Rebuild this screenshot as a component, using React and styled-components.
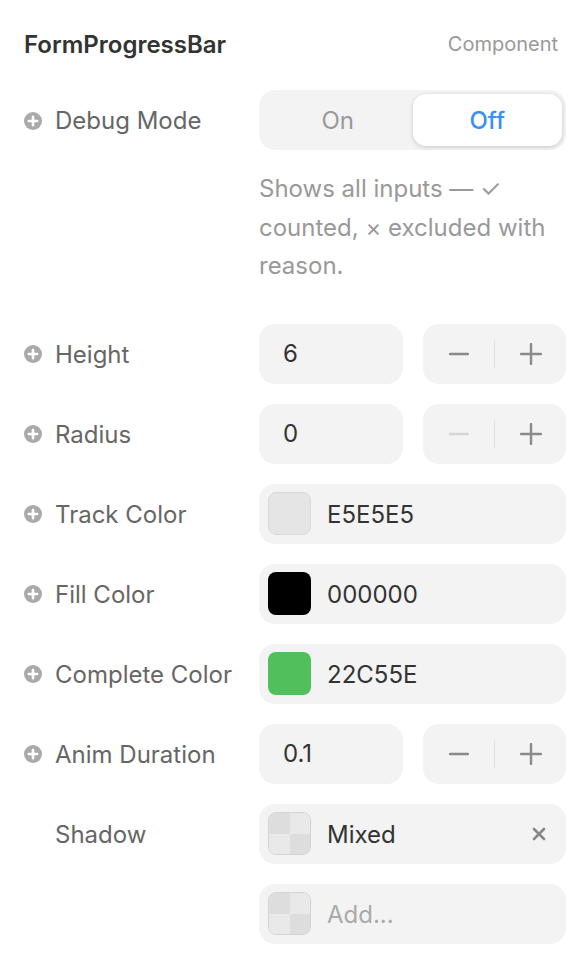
import React from "react";
import styled, { createGlobalStyle, css } from "styled-components";

const Global = createGlobalStyle`
  html, body { margin: 0; padding: 0; background: #ffffff; }
  body { font-family: Inter, "Noto Sans", "Liberation Sans", sans-serif; -webkit-font-smoothing: antialiased; }
  * { box-sizing: border-box; }
`;

const Panel = styled.div`
  width: 586px;
  padding: 22px 20px 0 24px;
  display: flex;
  flex-direction: column;
`;

const Header = styled.div`
  display: flex;
  justify-content: space-between;
  align-items: center;
  height: 44px;
  padding-right: 8px;
  margin-bottom: 24px;
`;

const Title = styled.div`
  font-size: 24px;
  font-weight: 600;
  color: #333333;
`;

const Kind = styled.div`
  font-size: 20px;
  color: #999999;
`;

const Row = styled.div`
  display: grid;
  grid-template-columns: 235px 1fr;
  align-items: center;
  margin-bottom: 20px;
`;

const Label = styled.div`
  display: flex;
  align-items: center;
  gap: 13px;
  font-size: 24px;
  color: #666666;
  padding-top: 1px;
  padding-left: ${(p) => (p.$noIcon ? "31px" : "0")};
`;

const Fields = styled.div`
  display: flex;
  gap: 20px;
`;

const Segmented = styled.div`
  flex: 1;
  height: 60px;
  background: #f3f3f3;
  border-radius: 16px;
  padding: 4px;
  display: flex;
`;

const Segment = styled.div`
  flex: 1;
  display: flex;
  align-items: center;
  justify-content: center;
  font-size: 24px;
  font-weight: 400;
  color: #999999;
  border-radius: 13px;
  ${(p) =>
    p.$active &&
    css`
      background: #ffffff;
      color: #3b8ff6;
      font-weight: 500;
      box-shadow: 0 1px 4px rgba(0, 0, 0, 0.18);
    `}
`;

const Description = styled.div`
  grid-column: 2;
  font-size: 24px;
  line-height: 38.5px;
  color: #999999;
  margin-bottom: 18px;
`;

const Box = styled.div`
  height: 60px;
  background: #f3f3f3;
  border-radius: 16px;
  display: flex;
  align-items: center;
`;

const NumberBox = styled(Box)`
  width: 144px;
  padding-left: 24px;
  font-size: 24px;
  color: #333333;
`;

const Stepper = styled(Box)`
  width: 143px;
  justify-content: space-between;
`;

const StepBtn = styled.div`
  flex: 1;
  height: 100%;
  display: flex;
  align-items: center;
  justify-content: center;
  color: ${(p) => (p.$disabled ? "#d6d6d6" : "#8a8a8a")};
`;

const Divider = styled.div`
  width: 1px;
  height: 28px;
  background: #e0e0e0;
`;

const ColorBox = styled(Box)`
  flex: 1;
  padding: 0 20px 0 9px;
  gap: 16px;
`;

const Swatch = styled.div`
  width: 43px;
  height: 43px;
  border-radius: 8px;
  flex-shrink: 0;
  background: ${(p) => p.$color};
  border: ${(p) => (p.$bordered ? "1.5px solid #d8d8d8" : "none")};
`;

const Checker = styled.div`
  width: 43px;
  height: 43px;
  border-radius: 8px;
  flex-shrink: 0;
  border: 1.5px solid #d4d4d4;
  overflow: hidden;
  display: grid;
  grid-template-columns: 1fr 1fr;
  grid-template-rows: 1fr 1fr;
`;

const Cell = styled.div`
  background: ${(p) => (p.$dark ? "#dddddd" : "#e9e9e9")};
`;

const Value = styled.div`
  flex: 1;
  font-size: 24px;
  padding-top: 1px;
  color: ${(p) => (p.$placeholder ? "#aaaaaa" : "#333333")};
`;

const Clear = styled.div`
  color: #888888;
  display: flex;
  align-items: center;
`;

const PlusIcon = () => (
  <svg width="18" height="18" viewBox="0 0 18 18">
    <circle cx="9" cy="9" r="9" fill="#aaaaaa" />
    <path d="M9 4.8v8.4M4.8 9h8.4" stroke="#ffffff" strokeWidth="2.6" strokeLinecap="round" />
  </svg>
);

const Minus = () => (
  <svg width="20" height="20" viewBox="0 0 20 20">
    <path d="M1 10h18" stroke="currentColor" strokeWidth="2.4" strokeLinecap="round" />
  </svg>
);

const Plus = () => (
  <svg width="22" height="22" viewBox="0 0 22 22">
    <path d="M11 1v20M1 11h20" stroke="currentColor" strokeWidth="2.4" strokeLinecap="round" />
  </svg>
);

const XIcon = () => (
  <svg width="14" height="14" viewBox="0 0 14 14">
    <path d="M2 2l10 10M12 2L2 12" stroke="currentColor" strokeWidth="2.6" strokeLinecap="round" />
  </svg>
);

const PropLabel = ({ children, noIcon }) => (
  <Label $noIcon={noIcon}>
    {!noIcon && <PlusIcon />}
    {children}
  </Label>
);

const NumberRow = ({ label, value, minusDisabled }) => (
  <Row>
    <PropLabel>{label}</PropLabel>
    <Fields>
      <NumberBox>{value}</NumberBox>
      <Stepper>
        <StepBtn $disabled={minusDisabled}>
          <Minus />
        </StepBtn>
        <Divider />
        <StepBtn>
          <Plus />
        </StepBtn>
      </Stepper>
    </Fields>
  </Row>
);

const ColorRow = ({ label, color, value, bordered }) => (
  <Row>
    <PropLabel>{label}</PropLabel>
    <ColorBox>
      <Swatch $color={color} $bordered={bordered} />
      <Value>{value}</Value>
    </ColorBox>
  </Row>
);

const CheckerSwatch = ({ invert }) => (
  <Checker>
    <Cell $dark={!invert} />
    <Cell $dark={invert} />
    <Cell $dark={invert} />
    <Cell $dark={!invert} />
  </Checker>
);

export default function App() {
  return (
    <>
      <Global />
      <Panel>
        <Header>
          <Title>FormProgressBar</Title>
          <Kind>Component</Kind>
        </Header>

        <Row>
          <PropLabel>Debug Mode</PropLabel>
          <Segmented>
            <Segment>On</Segment>
            <Segment $active>Off</Segment>
          </Segmented>
        </Row>
        <Row>
          <Description>Shows all inputs — ✓ counted, × excluded with reason.</Description>
        </Row>

        <NumberRow label="Height" value="6" />
        <NumberRow label="Radius" value="0" minusDisabled />
        <ColorRow label="Track Color" color="#e5e5e5" value="E5E5E5" bordered />
        <ColorRow label="Fill Color" color="#000000" value="000000" />
        <ColorRow label="Complete Color" color="#50bf5c" value="22C55E" />
        <NumberRow label="Anim Duration" value="0.1" />

        <Row>
          <PropLabel noIcon>Shadow</PropLabel>
          <ColorBox>
            <CheckerSwatch />
            <Value>Mixed</Value>
            <Clear>
              <XIcon />
            </Clear>
          </ColorBox>
        </Row>
        <Row>
          <div />
          <ColorBox>
            <CheckerSwatch />
            <Value $placeholder>Add...</Value>
          </ColorBox>
        </Row>
      </Panel>
    </>
  );
}
